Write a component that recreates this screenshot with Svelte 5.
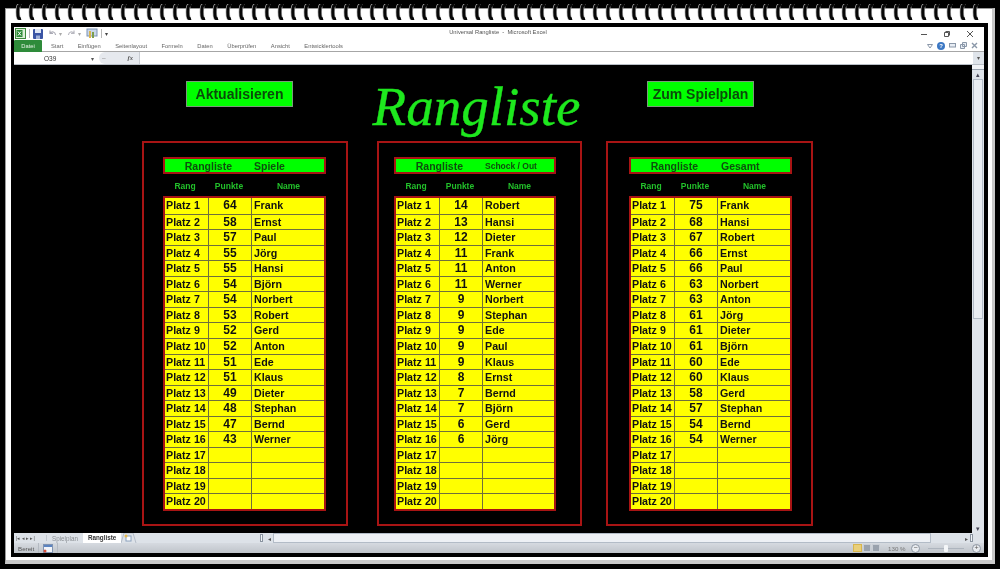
<script lang="ts">
  const coils = Array.from({ length: 74 }, (_, i) => i);
  const ribbonTabs = ['Start', 'Einfügen', 'Seitenlayout', 'Formeln', 'Daten', 'Überprüfen', 'Ansicht', 'Entwicklertools'];

  const panels = [
    {
      cls: 'p1',
      sub: 'Spiele',
      subSmall: false,
      rows: [
        [64, 'Frank'], [58, 'Ernst'], [57, 'Paul'], [55, 'Jörg'], [55, 'Hansi'], [54, 'Björn'], [54, 'Norbert'], [53, 'Robert'],
        [52, 'Gerd'], [52, 'Anton'], [51, 'Ede'], [51, 'Klaus'], [49, 'Dieter'], [48, 'Stephan'], [47, 'Bernd'], [43, 'Werner']
      ]
    },
    {
      cls: 'p2',
      sub: 'Schock / Out',
      subSmall: true,
      rows: [
        [14, 'Robert'], [13, 'Hansi'], [12, 'Dieter'], [11, 'Frank'], [11, 'Anton'], [11, 'Werner'], [9, 'Norbert'], [9, 'Stephan'],
        [9, 'Ede'], [9, 'Paul'], [9, 'Klaus'], [8, 'Ernst'], [7, 'Bernd'], [7, 'Björn'], [6, 'Gerd'], [6, 'Jörg']
      ]
    },
    {
      cls: 'p3',
      sub: 'Gesamt',
      subSmall: false,
      rows: [
        [75, 'Frank'], [68, 'Hansi'], [67, 'Robert'], [66, 'Ernst'], [66, 'Paul'], [63, 'Norbert'], [63, 'Anton'], [61, 'Jörg'],
        [61, 'Dieter'], [61, 'Björn'], [60, 'Ede'], [60, 'Klaus'], [58, 'Gerd'], [57, 'Stephan'], [54, 'Bernd'], [54, 'Werner']
      ]
    }
  ];

  const places = Array.from({ length: 20 }, (_, i) => i);
</script>

<div class="screen">
  <div class="coils">
    {#each coils as c (c)}
      <svg width="7" height="16" viewBox="0 0 7 16">
        <path d="M6 1.6C3.6.8 2.8 2 2.8 8s.8 7.2 3.2 6.6" fill="none" stroke="#b4b4b4" stroke-width="4.4" />
        <path d="M6 1.6C3.6.8 2.8 2 2.8 8s.8 7.2 3.2 6.6" fill="none" stroke="#080808" stroke-width="3" />
      </svg>
    {/each}
  </div>

  <div class="frame">
    <div class="window">
      <div class="qat">
        <svg class="xl" width="11" height="11" viewBox="0 0 11 11">
          <rect x=".5" y=".5" width="10" height="10" fill="#dcefd8" stroke="#3d8a3d" />
          <rect x="1.5" y="2" width="6" height="7" fill="#2c8a36" />
          <path d="M3 3.5l3 4M6 3.5l-3 4" stroke="#fff" />
        </svg>
        <span class="sep"></span>
        <svg width="10" height="10" viewBox="0 0 10 10">
          <rect width="10" height="10" rx="1" fill="#3a55a5" />
          <rect x="2" y="0" width="6" height="4" fill="#dfe7f5" />
          <rect x="3" y="6.5" width="4" height="3.5" fill="#9fb0d8" />
        </svg>
        <svg class="gap" width="9" height="9" viewBox="0 0 9 9">
          <path d="M2 1.5v3h3M2.2 4.4C4 2 7 2.6 7.6 6" fill="none" stroke="#a9a9b4" stroke-width="1.2" />
        </svg>
        <span class="drop">▾</span>
        <svg class="gap" width="9" height="9" viewBox="0 0 9 9">
          <path d="M7 1.5v3H4M6.8 4.4C5 2 2 2.6 1.4 6" fill="none" stroke="#b8b8c0" stroke-width="1.2" />
        </svg>
        <span class="drop">▾</span>
        <svg class="gap" width="12" height="11" viewBox="0 0 12 11">
          <rect x="1" y="1" width="10" height="7" fill="#c9d7ea" stroke="#7d93b5" />
          <rect x="3" y="3" width="2" height="7" fill="#d8b552" />
          <rect x="6" y="4" width="2" height="6" fill="#7e9e4c" />
        </svg>
        <span class="sep"></span>
        <span class="drop dark">▾</span>
        <span class="title">Universal Rangliste  -  Microsoft Excel</span>
        <div class="winbtns">
          <svg width="8" height="8" viewBox="0 0 8 8"><path d="M1 4.5h6" stroke="#555" /></svg>
          <svg width="8" height="8" viewBox="0 0 8 8"><path d="M2.5 1.5h4v4M1.5 2.5h4v4h-4z" fill="none" stroke="#555" /></svg>
          <svg width="8" height="8" viewBox="0 0 8 8"><path d="M1 1l6 6M7 1L1 7" stroke="#555" /></svg>
        </div>
      </div>

      <div class="tabs">
        <span class="datei">Datei</span>
        {#each ribbonTabs as t (t)}
          <span class="tab">{t}</span>
        {/each}
        <div class="helpbtns">
          <svg width="6" height="6" viewBox="0 0 6 6"><path d="M.5 1.5h5L3 5z" fill="none" stroke="#8a97a8" /></svg>
          <span class="help">?</span>
          <svg width="7" height="5" viewBox="0 0 7 5"><rect x=".5" y=".5" width="6" height="3.5" fill="#e8edf4" stroke="#8a97a8" /></svg>
          <svg width="7" height="7" viewBox="0 0 7 7"><path d="M2.5.5h4v4h-4zM.5 2.5h4v4h-4z" fill="#e8edf4" stroke="#8a97a8" /></svg>
          <svg width="7" height="7" viewBox="0 0 7 7"><path d="M1 1l5 5M6 1L1 6" stroke="#8a97a8" stroke-width="1.4" /></svg>
        </div>
      </div>

      <div class="formula">
        <span class="namebox">O39</span>
        <span class="nbdrop">▾</span>
        <span class="fxwrap"><span class="fxdash">–</span><i class="fx">fx</i></span>
        <span class="input"></span>
        <span class="fxscroll">▾</span>
      </div>

      <div class="body">
        <div class="sheet">
          <div class="head">
            <button class="btn b1">Aktualisieren</button>
            <h1>Rangliste</h1>
            <button class="btn b2">Zum Spielplan</button>
          </div>
          <div class="panels">
            {#each panels as p (p.cls)}
              <section class="panel {p.cls}">
                <div class="banner">
                  <span class="b-main">Rangliste</span>
                  <span class="b-sub" class:small={p.subSmall}>{p.sub}</span>
                </div>
                <div class="cols">
                  <span>Rang</span>
                  <span>Punkte</span>
                  <span>Name</span>
                </div>
                <div class="table">
                  {#each places as i (i)}
                    <div class="row">
                      <span class="c-place">Platz {i + 1}</span>
                      <span class="c-points">{p.rows[i]?.[0] ?? ''}</span>
                      <span class="c-name">{p.rows[i]?.[1] ?? ''}</span>
                    </div>
                  {/each}
                </div>
              </section>
            {/each}
          </div>
        </div>
        <div class="vscroll">
          <span class="splitter"></span>
          <span class="arrow">▴</span>
          <span class="vtrack"><span class="vthumb"></span></span>
          <span class="arrow">▾</span>
        </div>
      </div>

      <div class="sheetbar">
        <span class="nav">|◂ ◂ ▸ ▸|</span>
        <span class="stab">Spielplan</span>
        <span class="stab on">Rangliste</span>
        <svg width="16" height="10" viewBox="0 0 16 10">
          <path d="M0 10L3 0h9l3 10" fill="none" stroke="#b4bcc8" />
          <rect x="5" y="3" width="5" height="5" fill="#fff" stroke="#8aa0bc" />
          <circle cx="5" cy="3" r="1.5" fill="#e5b84b" />
        </svg>
        <span class="hgrow"></span>
        <span class="hsplit"></span>
        <span class="hleft">◂</span>
        <span class="htrack"><span class="hthumb"></span></span>
        <span class="hright">▸</span>
        <span class="hsplit end"></span>
      </div>

      <div class="status">
        <span class="ready">Bereit</span>
        <span class="statsep"></span>
        <svg width="10" height="9" viewBox="0 0 10 9">
          <rect x=".5" y=".5" width="9" height="8" fill="#f2f5fa" stroke="#7f93b2" />
          <rect x="1" y="1" width="8" height="2" fill="#5c84c0" />
          <circle cx="2" cy="7" r="1.5" fill="#d94f3a" />
        </svg>
        <span class="statsep"></span>
        <span class="hgrow"></span>
        <span class="views">
          <span class="view active"></span>
          <span class="view"></span>
          <span class="view"></span>
        </span>
        <span class="zoom">130 %</span>
        <span class="zbtn">−</span>
        <span class="ztrack"><span class="zthumb"></span></span>
        <span class="zbtn">+</span>
      </div>
    </div>
  </div>
</div>

<style>
  :global(body) {
    margin: 0;
    background: #000;
  }

  .screen {
    position: relative;
    width: 1000px;
    height: 569px;
    box-sizing: border-box;
    padding: 8px 5px 5px 5px;
    background: #000;
    font-family: "Liberation Sans", Arial, sans-serif;
    overflow: hidden;
    filter: blur(0.35px);
  }

  .coils {
    position: absolute;
    top: 4px;
    left: 15px;
    width: 964px;
    display: flex;
    justify-content: space-between;
    z-index: 2;
  }

  .coils svg {
    display: block;
  }

  .frame {
    height: 100%;
    box-sizing: border-box;
    padding: 14px 4px 3px 5px;
    background: #fff;
    border: 1px solid #9a9a9a;
    border-right: 3px solid #c8c8c8;
    border-bottom: 4px solid #c8c8c8;
  }

  .window {
    height: 100%;
    box-sizing: border-box;
    padding: 4px 4px 4px 3px;
    background: #000;
    display: flex;
    flex-direction: column;
  }

  .qat {
    position: relative;
    height: 13px;
    flex: none;
    background: #fff;
    display: flex;
    align-items: center;
    gap: 2px;
    padding-left: 1px;
  }

  .sep {
    width: 1px;
    height: 9px;
    background: #b8b8b8;
    margin: 0 1px;
  }

  .gap {
    margin-left: 3px;
  }

  .drop {
    font-size: 6px;
    color: #aaa;
    line-height: 1;
  }

  .drop.dark {
    color: #444;
  }

  .title {
    position: absolute;
    left: 0;
    right: 0;
    top: 2px;
    text-align: center;
    font-size: 5.8px;
    color: #555;
    white-space: pre;
    padding-right: 2px;
  }

  .winbtns {
    margin-left: auto;
    margin-right: 10px;
    display: flex;
    gap: 15px;
  }

  .tabs {
    height: 12px;
    box-sizing: border-box;
    flex: none;
    background: #fff;
    display: flex;
    align-items: center;
    border-bottom: 1px solid #a6a6a6;
    font-size: 5.8px;
    color: #666;
  }

  .datei {
    width: 28px;
    height: 12px;
    line-height: 12px;
    text-align: center;
    background: #2e8b3a;
    color: #e8f4e8;
    border-radius: 1px 1px 0 0;
    margin-right: 9px;
  }

  .tab {
    margin-right: 14.5px;
    white-space: nowrap;
  }

  .helpbtns {
    margin-left: auto;
    margin-right: 6px;
    display: flex;
    align-items: center;
    gap: 4px;
  }

  .help {
    width: 8px;
    height: 8px;
    border-radius: 50%;
    background: #3c78c4;
    color: #fff;
    font-size: 6px;
    font-weight: 700;
    line-height: 8px;
    text-align: center;
  }

  .formula {
    height: 13px;
    box-sizing: border-box;
    flex: none;
    background: #fff;
    display: flex;
    align-items: center;
    font-size: 6.5px;
    color: #333;
    border-bottom: 1px solid #b8bec6;
  }

  .namebox {
    width: 70px;
    padding-left: 30px;
    box-sizing: border-box;
  }

  .nbdrop {
    font-size: 6px;
    color: #555;
    width: 8px;
    margin-left: 7px;
  }

  .fxwrap {
    width: 40px;
    height: 12px;
    line-height: 12px;
    background: #e6e9ee;
    border-radius: 6px 0 0 6px;
    display: flex;
    justify-content: space-between;
    padding: 0 6px 0 3px;
    box-sizing: border-box;
    color: #999;
  }

  .fx {
    font-family: "Liberation Serif", serif;
    font-weight: 700;
    color: #555;
  }

  .input {
    flex: 1;
    height: 12px;
    border-left: 1px solid #c8ccd2;
  }

  .fxscroll {
    width: 11px;
    height: 12px;
    line-height: 12px;
    font-size: 6px;
    text-align: center;
    background: #dfe4ea;
    color: #555;
  }

  .body {
    flex: 1;
    min-height: 0;
    display: flex;
  }

  .sheet {
    flex: 1;
    min-width: 0;
    background: #000;
  }

  .head {
    height: 76px;
    box-sizing: border-box;
    padding: 16px 0 0 172px;
    display: flex;
    align-items: flex-start;
  }

  .btn {
    height: 26px;
    padding: 0;
    background: #00ff00;
    border: 1px solid #7a9a7a;
    color: #0a4a0a;
    font-family: inherit;
    font-size: 14px;
    font-weight: 700;
  }

  .b1 {
    width: 107px;
    margin-right: 79px;
  }

  .b2 {
    width: 107px;
    margin-left: 66px;
  }

  h1 {
    width: 209px;
    margin: -9px 0 0;
    color: #1ee81e;
    font-family: "Liberation Serif", serif;
    font-style: italic;
    font-weight: 400;
    font-size: 55px;
    line-height: 70px;
    text-align: center;
    white-space: nowrap;
    -webkit-text-stroke: 0.4px #1ee81e;
  }

  .panels {
    display: flex;
    padding-left: 128px;
  }

  .panel {
    height: 385px;
    box-sizing: border-box;
    border: 2px solid #a81414;
    padding-top: 14px;
  }

  .p1 {
    width: 206px;
    margin-right: 29px;
    padding-left: 19px;
  }

  .p2 {
    width: 205px;
    margin-right: 24px;
    padding-left: 15px;
  }

  .p3 {
    width: 207px;
    padding-left: 21px;
  }

  .banner {
    width: 163px;
    height: 17px;
    box-sizing: border-box;
    display: flex;
    align-items: center;
    background: #00ff00;
    border: 2px solid #a81414;
    color: #0d4f0d;
    font-size: 10.5px;
    font-weight: 700;
    white-space: nowrap;
  }

  .b-main {
    width: 67px;
    text-align: right;
  }

  .b-sub {
    margin-left: 22px;
  }

  .b-sub.small {
    font-size: 8.5px;
  }

  .p2 .banner {
    width: 162px;
  }

  .p3 .b-sub {
    margin-left: 23px;
  }

  .cols {
    width: 163px;
    height: 23px;
    display: grid;
    grid-template-columns: 44px 44px 1fr;
    align-items: center;
    text-align: center;
    color: #22c02a;
    font-size: 8.5px;
    font-weight: 700;
  }

  .table {
    width: 163px;
    height: 315px;
    box-sizing: border-box;
    margin-top: -1px;
    background: #ffff00;
    border: 2px solid #a81414;
    display: grid;
    grid-template-rows: repeat(20, 1fr);
  }

  .p2 .table {
    width: 162px;
  }

  .row {
    display: grid;
    grid-template-columns: 43px 44px 1fr;
    align-items: center;
    min-height: 0;
    border-top: 1px solid #6f6f3c;
    color: #111;
    font-size: 10.7px;
    font-weight: 700;
    line-height: 14px;
  }

  .row:first-child {
    border-top: 0;
  }

  .row > span {
    height: 100%;
    white-space: nowrap;
    overflow: hidden;
  }

  .c-place {
    padding-left: 1px;
  }

  .c-points {
    border-left: 1px solid #6f6f3c;
    border-right: 1px solid #6f6f3c;
    text-align: center;
    font-size: 12px;
  }

  .c-name {
    padding-left: 2px;
  }

  .vscroll {
    width: 12px;
    flex: none;
    display: flex;
    flex-direction: column;
    background: #dfe4ea;
    color: #445;
    font-size: 7px;
    text-align: center;
  }

  .splitter {
    height: 4px;
    background: #f2f4f7;
    border-bottom: 1px solid #9aa4b0;
  }

  .arrow {
    height: 9px;
    line-height: 9px;
  }

  .vtrack {
    flex: 1;
    padding: 0 1px;
  }

  .vthumb {
    display: block;
    width: 100%;
    height: 240px;
    box-sizing: border-box;
    background: #e9edf2;
    border: 1px solid #b3bcc7;
  }

  .sheetbar {
    height: 10px;
    flex: none;
    display: flex;
    align-items: center;
    background: #dde2e8;
    font-size: 6.3px;
    color: #555;
  }

  .nav {
    width: 33px;
    font-size: 5px;
    padding-left: 2px;
    box-sizing: border-box;
    border-right: 1px solid #c0c6ce;
    white-space: nowrap;
  }

  .stab {
    padding: 0 5px;
    color: #8b8f94;
  }

  .stab.on {
    background: #fff;
    color: #333;
    font-weight: 700;
    height: 10px;
    line-height: 10px;
  }

  .hgrow {
    flex: 1;
  }

  .hsplit {
    width: 3px;
    height: 8px;
    background: #f2f4f7;
    border: 1px solid #8a94a0;
    box-sizing: border-box;
    margin-right: 2px;
  }

  .hsplit.end {
    margin-right: 11px;
  }

  .hleft,
  .hright {
    width: 8px;
    font-size: 6px;
    text-align: center;
  }

  .htrack {
    width: 689px;
    height: 10px;
    padding: 0;
  }

  .hthumb {
    display: block;
    width: 658px;
    height: 10px;
    box-sizing: border-box;
    background: #eef1f5;
    border: 1px solid #b3bcc7;
  }

  .status {
    height: 10px;
    flex: none;
    display: flex;
    align-items: center;
    gap: 4px;
    padding-right: 3px;
    background: linear-gradient(#d6dae0, #bfc4ca);
    font-size: 6.2px;
    color: #555;
  }

  .ready {
    padding-left: 4px;
  }

  .statsep {
    width: 1px;
    height: 10px;
    background: #b4bac2;
  }

  .views {
    display: flex;
    gap: 1px;
    margin-right: 4px;
  }

  .view {
    width: 8px;
    height: 8px;
    background: #9aa2ad;
    border: 1px solid #c9ced5;
    box-sizing: border-box;
  }

  .view.active {
    width: 9px;
    background: #e9cf7a;
    border-color: #d8b64d;
  }

  .zoom {
    color: #777;
    width: 18px;
    margin-right: 1px;
  }

  .zbtn {
    width: 7px;
    height: 7px;
    line-height: 6px;
    border: 1px solid #8d96a2;
    border-radius: 50%;
    background: #e8ebef;
    font-size: 7px;
    text-align: center;
  }

  .ztrack {
    width: 36px;
    height: 1px;
    background: #aeb5be;
    position: relative;
    margin: 0 4px;
  }

  .zthumb {
    position: absolute;
    left: 16px;
    top: -3px;
    width: 4px;
    height: 7px;
    border-radius: 1px;
    background: #f4f6f8;
  }
</style>
